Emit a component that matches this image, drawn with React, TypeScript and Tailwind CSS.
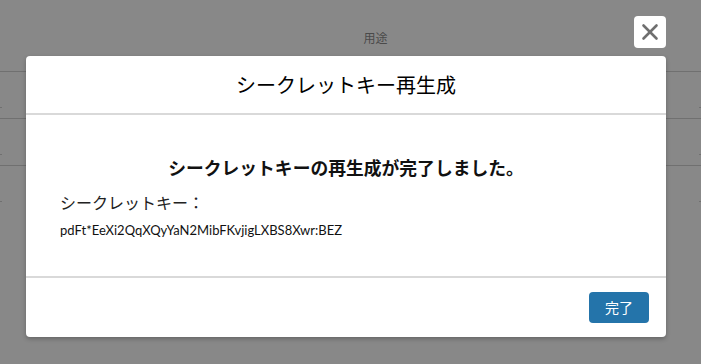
// Secret key regenerated dialog over a dimmed table
import { X } from "lucide-react";

const JP = "font-['Noto_Sans_CJK_JP','Noto_Sans',sans-serif]";

export default function App() {
  const rows = [0, 1, 2];

  return (
    <div className={`relative h-[364px] w-[701px] overflow-hidden bg-[#888888] ${JP}`}>
      {/* Dimmed table behind the modal */}
      <div className="flex flex-col">
        <div className="flex h-[71px] items-center justify-center pl-[50px] pt-[5px] text-[12px] text-[#4a4a4a]">
          用途
        </div>
        {rows.map((r) => (
          <div key={r} className="relative h-[47px] border-t border-[#707070]">
            <div className="absolute bottom-[10px] left-0 h-px w-[2px] bg-[#707070]" />
            <div className="absolute bottom-[10px] right-0 h-px w-[2px] bg-[#707070]" />
          </div>
        ))}
      </div>

      {/* Close button */}
      <button className="absolute left-[634px] top-[16px] flex h-[32px] w-[32px] items-center justify-center rounded-[4px] bg-white">
        <X className="h-[26px] w-[26px] text-[#6f6f6f]" strokeWidth={2.4} />
      </button>

      {/* Modal */}
      <div className="absolute left-[26px] top-[56px] flex w-[640px] flex-col rounded-[4px] bg-white shadow-[0_2px_4px_rgba(0,0,0,0.25)]">
        <div className="flex h-[59px] items-center justify-center border-b-2 border-[#d9d9d9] text-[20px] text-black">
          シークレットキー再生成
        </div>
        <div className="flex h-[163px] flex-col border-b-2 border-[#d9d9d9] px-[34px] pt-[37px]">
          <h2 className="text-center text-[17.8px] font-bold leading-[30px] text-[#111]">
            シークレットキーの再生成が完了しました。
          </h2>
          <p className="mt-[5px] text-[16px] leading-[30px] text-[#222]">シークレットキー：</p>
          <p className="mt-[3px] font-['Lato','Noto_Sans',sans-serif] text-[13px] leading-[20px] text-[#111]">
            pdFt*EeXi2QqXQyYaN2MibFKvjigLXBS8Xwr:BEZ
          </p>
        </div>
        <div className="flex h-[59px] items-center justify-end pr-[17px]">
          <button className="flex h-[31px] w-[60px] items-center justify-center rounded-[4px] bg-[#2474aa] text-[14px] text-white">
            完了
          </button>
        </div>
      </div>
    </div>
  );
}
